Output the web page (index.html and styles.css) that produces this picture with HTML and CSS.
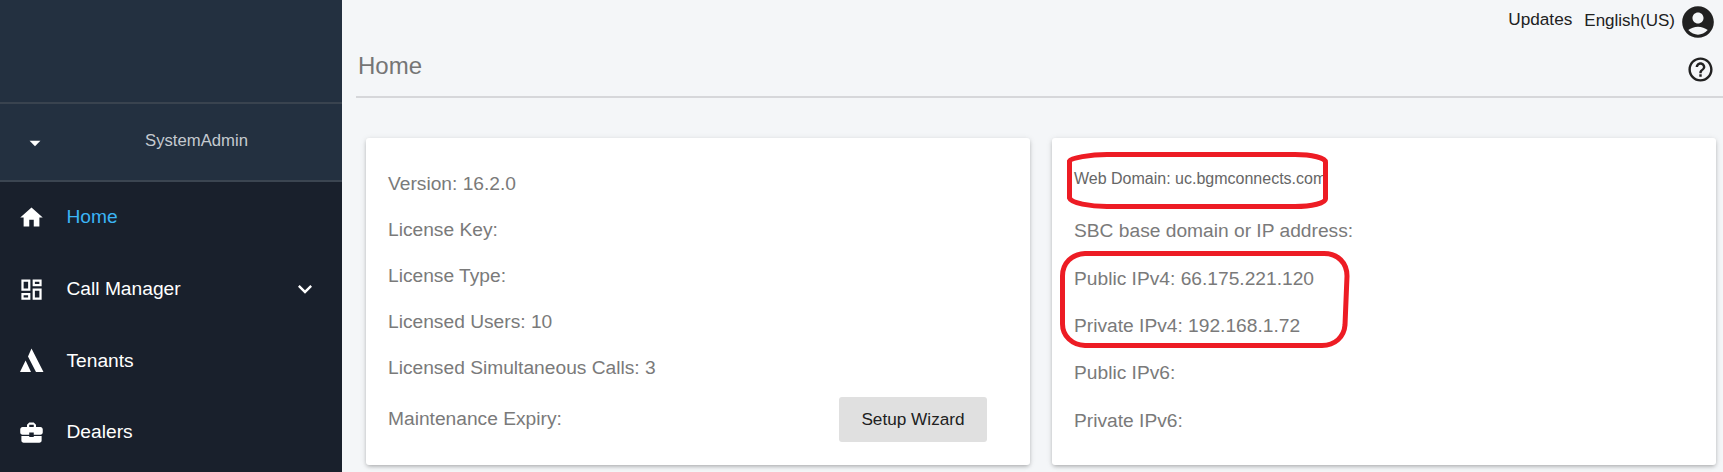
FILE: index.html
```html
<!DOCTYPE html>
<html lang="en">
<head>
<meta charset="utf-8">
<title>Home</title>
<link rel="stylesheet" href="styles.css">
</head>
<body>
<div class="app">
  <aside class="sidebar">
    <div class="brand"></div>
    <div class="user">
      <svg class="caret" viewBox="0 0 24 24"><path d="M7 10l5 5 5-5z"/></svg>
      <span class="user-name">SystemAdmin</span>
    </div>
    <nav class="nav">
      <a class="nav-item active">
        <svg class="nav-icon" viewBox="0 0 24 24"><path d="M10 20v-6h4v6h5v-8h3L12 3 2 12h3v8z"/></svg>
        <span>Home</span>
      </a>
      <a class="nav-item">
        <svg class="nav-icon" viewBox="0 0 24 24"><path d="M19 5v2h-4V5h4M9 5v6H5V5h4m10 8v6h-4v-6h4M9 17v2H5v-2h4M21 3h-8v6h8V3zM11 3H3v10h8V3zm10 8h-8v10h8V11zm-10 4H3v6h8v-6z"/></svg>
        <span>Call Manager</span>
        <svg class="chevron" viewBox="0 0 24 24"><path d="M16.59 8.59L12 13.17 7.41 8.59 6 10l6 6 6-6z"/></svg>
      </a>
      <a class="nav-item">
        <svg class="nav-icon" viewBox="0 0 27 27"><path d="M13.5 1.5L25.5 25h-7.5L10 9.5zM7.6 13.5L13 25H2z"/></svg>
        <span>Tenants</span>
      </a>
      <a class="nav-item">
        <svg class="nav-icon" viewBox="0 0 24 24"><path d="M10 16v-1H3.01L3 19c0 1.11.89 2 2 2h14c1.11 0 2-.89 2-2v-4h-7v1h-4zm10-9h-4.01V5l-2-2h-4l-2 2v2H4c-1.1 0-2 .9-2 2v3c0 1.11.89 2 2 2h6v-2h4v2h6c1.1 0 2-.9 2-2V9c0-1.1-.9-2-2-2zm-6 0h-4V5h4v2z"/></svg>
        <span>Dealers</span>
      </a>
    </nav>
  </aside>
  <main class="main">
    <div class="topbar">
      <span class="top-link updates">Updates</span>
      <span class="top-link lang">English(US)</span>
      <svg class="account" viewBox="0 0 24 24"><path d="M12 2C6.48 2 2 6.48 2 12s4.48 10 10 10 10-4.48 10-10S17.52 2 12 2zm0 4c1.93 0 3.5 1.57 3.5 3.5S13.93 13 12 13s-3.5-1.57-3.5-3.5S10.07 6 12 6zm0 14c-2.03 0-4.43-.82-6.14-2.88C7.55 15.8 9.68 15 12 15s4.45.8 6.14 2.12C16.43 19.18 14.03 20 12 20z"/></svg>
    </div>
    <header class="page-head">
      <h1 class="page-title">Home</h1>
      <svg class="help" viewBox="0 0 24 24"><path d="M11 18h2v-2h-2v2zm1-16C6.48 2 2 6.48 2 12s4.48 10 10 10 10-4.48 10-10S17.52 2 12 2zm0 18c-4.41 0-8-3.59-8-8s3.59-8 8-8 8 3.59 8 8-3.59 8-8 8zm0-14c-2.21 0-4 1.79-4 4h2c0-1.1.9-2 2-2s2 .9 2 2c0 2-3 1.75-3 5h2c0-2.25 3-2.5 3-5 0-2.21-1.79-4-4-4z"/></svg>
    </header>
    <div class="cards">
      <section class="card card-left">
        <div class="row">Version: 16.2.0</div>
        <div class="row">License Key:</div>
        <div class="row">License Type:</div>
        <div class="row">Licensed Users: 10</div>
        <div class="row">Licensed Simultaneous Calls: 3</div>
        <div class="row row-last">
          <span>Maintenance Expiry:</span>
          <button class="wizard" type="button">Setup Wizard</button>
        </div>
      </section>
      <section class="card card-right">
        <div class="row row-domain">Web Domain: uc.bgmconnects.com</div>
        <div class="row">SBC base domain or IP address:</div>
        <div class="row">Public IPv4: 66.175.221.120</div>
        <div class="row">Private IPv4: 192.168.1.72</div>
        <div class="row">Public IPv6:</div>
        <div class="row">Private IPv6:</div>
      </section>
    </div>
  </main>
  <svg class="marks" viewBox="0 0 1723 472">
    <path d="M1069.5 161C1071 158 1090 154.5 1107 154.5L1295 154.5C1312 154.5 1325.5 158 1325.5 162L1325.5 199C1325.5 203 1312 206.5 1295 206.5L1107 206.5C1090 206.5 1071 203 1069.5 198Z"/>
    <path d="M1085 253.5L1324 253.5C1338 253.5 1347 263 1347 276L1345 325C1344 337 1335 345.5 1322 345.5L1085 345.5C1072 345 1062.5 336 1062.5 324L1062.5 276C1062.5 263 1072 254 1085 253.5Z"/>
  </svg>
</div>
</body>
</html>
```
FILE: styles.css
```css
* { box-sizing: border-box; }
html, body { margin: 0; padding: 0; height: 100%; overflow: hidden; }
body { font-family: "Liberation Sans", Arial, sans-serif; background: #f4f6f8; }
.app { position: relative; display: flex; width: 1723px; height: 472px; overflow: hidden; }

.sidebar { flex: 0 0 342px; width: 342px; background: #19202c; display: flex; flex-direction: column; }
.brand { height: 104px; background: #233040; border-bottom: 2px solid #39434f; }
.user { height: 77.5px; background: #233040; border-bottom: 2px solid #3b4551; display: flex; align-items: center; position: relative; padding-left: 22px; }
.caret { width: 26px; height: 26px; fill: #fff; margin-top: 2px; }
.user-name { position: absolute; left: 145px; top: 27px; font-size: 16.7px; line-height: 20px; color: #c5cad0; }
.nav { display: flex; flex-direction: column; }
.nav-item { height: 71.7px; display: flex; align-items: center; padding-left: 18px; font-size: 19.2px; color: #fff; }
.nav-item.active { color: #3bb4f5; }
.nav-icon { flex: none; width: 27px; height: 27px; fill: #fff; margin-right: 21.5px; }
.chevron { width: 28px; height: 28px; fill: #fff; margin-left: auto; margin-right: 23px; }

.main { flex: 1; min-width: 0; display: flex; flex-direction: column; }
.topbar { height: 41px; display: flex; align-items: center; justify-content: flex-end; padding-right: 6px; color: #212121; font-size: 17.2px; }
.top-link { line-height: 20px; }
.updates { margin-right: 12px; margin-top: -3px; }
.lang { margin-right: 4px; font-size: 17px; }
.account { width: 38px; height: 38px; fill: #212121; margin-top: 3px; }
.page-head { height: 57px; margin-left: 14px; display: flex; align-items: center; justify-content: space-between; border-bottom: 2px solid #d6d7da; padding: 0 8px 6px 2px; }
.page-title { margin: 0; font-size: 24px; font-weight: 400; color: #757575; line-height: 28px; }
.help { width: 29px; height: 29px; fill: #212121; margin-top: 7px; }

.cards { display: grid; grid-template-columns: 664px 664px; gap: 22px; padding: 40px 7px 0 24px; }
.card { height: 327px; background: #fff; border-radius: 3px; box-shadow: 0 2px 4px -1px rgba(0,0,0,.28), 0 1px 6px rgba(0,0,0,.1); display: flex; flex-direction: column; font-size: 19.2px; color: #7a7a7a; }
.card-left { padding: 22.5px 43px 0 22px; }
.card-right { padding: 17px 20px 0 22px; }
.row { display: flex; align-items: center; justify-content: space-between; line-height: 22px; }
.card-left .row { height: 46.2px; }
.card-right .row { height: 47.4px; }
.card-right .row-domain { height: 48px; font-size: 16px; color: #666; margin-bottom: 4.5px; }
.card-left .row-last { height: 50px; margin-top: 3px; }
.wizard { width: 148px; height: 45px; border: 0; border-radius: 3px; background: #e0e0e0; color: #212121; font: inherit; font-size: 17.2px; padding: 0; }

.marks { position: absolute; left: 0; top: 0; width: 1723px; height: 472px; pointer-events: none; fill: none; stroke: #ed1c24; stroke-width: 5; }
```
